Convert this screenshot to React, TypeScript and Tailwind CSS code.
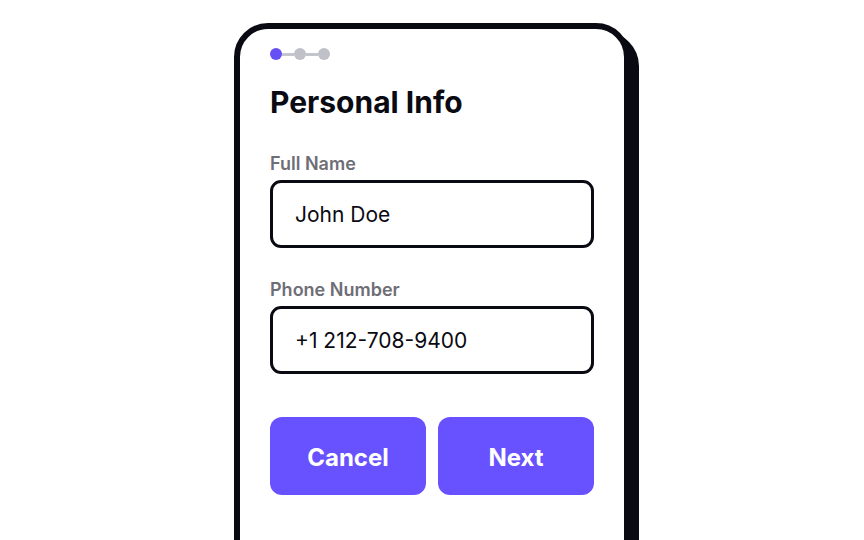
import React from 'react';

const Field = ({ label, value }: { label: string; value: string }) => (
  <div className="flex flex-col">
    <label className="text-[18px] leading-[20px] font-semibold text-[#6e6e76]">{label}</label>
    <div className="mt-[6px] h-[68px] rounded-[11px] border-[3px] border-[#0a0a12] flex items-center pl-[22px]">
      <span className="text-[21px] text-[#0a0a12] translate-y-[1px]">{value}</span>
    </div>
  </div>
);

const App: React.FC = () => {
  return (
    <div
      className="w-[864px] h-[540px] overflow-hidden bg-white flex justify-center pt-[23px]"
      style={{ fontFamily: 'Inter, "Noto Sans", sans-serif' }}
    >
      <div className="w-[396px] h-[560px] shrink-0 rounded-[34px] border-[6px] border-[#0a0a12] bg-white shadow-[9px_9px_0_0_#0a0a12] px-[30px] pt-[19px]">
        <div className="flex items-center">
          <div className="w-[12px] h-[12px] rounded-full bg-[#6550f5]" />
          <div className="w-[12px] h-[3px] bg-[#c4c4cc]" />
          <div className="w-[12px] h-[12px] rounded-full bg-[#c0c0c8]" />
          <div className="w-[12px] h-[3px] bg-[#c4c4cc]" />
          <div className="w-[12px] h-[12px] rounded-full bg-[#c0c0c8]" />
        </div>
        <h1 className="mt-[24px] text-[30px] leading-[36px] font-bold text-[#0a0a12]">Personal Info</h1>
        <div className="mt-[34px]">
          <Field label="Full Name" value="John Doe" />
        </div>
        <div className="mt-[32px]">
          <Field label="Phone Number" value="+1 212-708-9400" />
        </div>
        <div className="mt-[43px] flex gap-[12px]">
          <button className="flex-1 h-[78px] rounded-[12px] bg-[#6851ff] text-white text-[24px] font-bold pt-[3px]">
            Cancel
          </button>
          <button className="flex-1 h-[78px] rounded-[12px] bg-[#6851ff] text-white text-[24px] font-bold pt-[3px]">
            Next
          </button>
        </div>
      </div>
    </div>
  );
};

export default App;
